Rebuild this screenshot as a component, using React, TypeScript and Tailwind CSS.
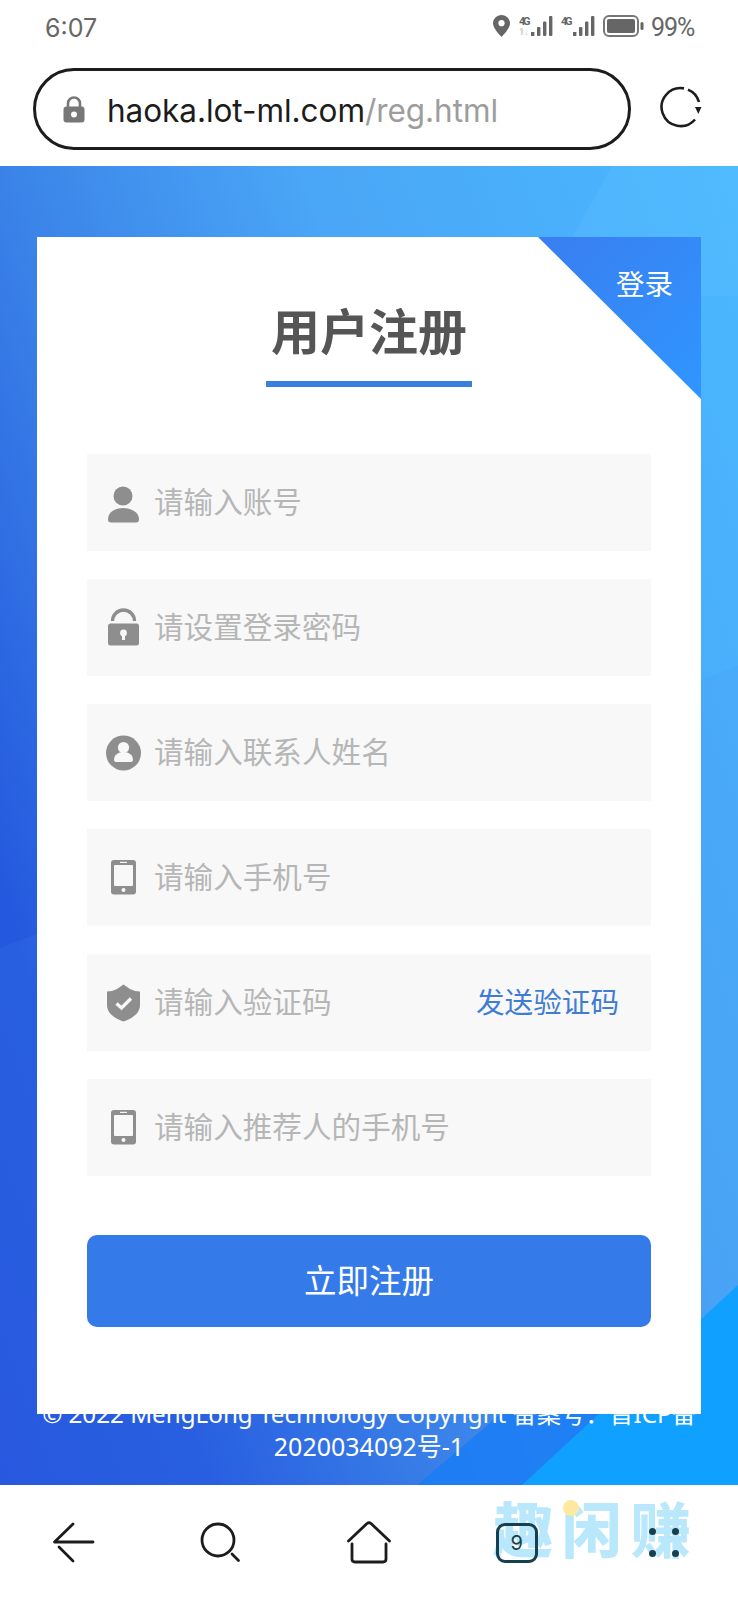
const cjk = "font-['Noto_Sans','Noto_Sans_CJK_SC',sans-serif]";

const Signal = ({ roaming }: { roaming?: boolean }) => (
  <svg width="34" height="22" viewBox="0 0 34 22" fill="#666">
    <text x="0" y="9.5" fontSize="11" fontWeight="700" fontFamily="Roboto, sans-serif" textLength="11.500">4G</text>
    {roaming && <text x="0" y="20" fontSize="9" fontWeight="700" fill="#c9c9c9" fontFamily="Roboto, sans-serif">1↓</text>}
    <rect x="12" y="17" width="3.4" height="4" />
    <rect x="18" y="12" width="3.4" height="9" rx="1" />
    <rect x="24" y="6.5" width="3.4" height="14.5" rx="1" />
    <rect x="30" y="1" width="3.4" height="20" rx="1" />
  </svg>
);

const StatusBar = () => (
  <div className="h-[60px] flex items-center justify-between pl-[45px] pr-[41px] pb-[9px] font-['Inter',sans-serif] text-[#666]">
    <span className="mt-[5px] text-[25px] leading-none">6:07</span>
    <div className="flex items-center">
      <svg width="17" height="22" viewBox="0 0 17 22" fill="#666">
        <path d="M8.5 0C3.8 0 0 3.700 0 8.300 0 14 8.500 22 8.500 22S17 14 17 8.300C17 3.700 13.200 0 8.500 0Z" />
        <circle cx="8.5" cy="8.2" r="3.1" fill="#fff" />
      </svg>
      <div className="ml-[9px]"><Signal roaming /></div>
      <div className="ml-[8px]"><Signal /></div>
      <svg className="ml-[8px]" width="41" height="22" viewBox="0 0 41 22" fill="#666">
        <rect x="1" y="1" width="34" height="20" rx="5" fill="none" stroke="#777" strokeWidth="2" />
        <rect x="4" y="4" width="28" height="14" rx="2" />
        <rect x="37.5" y="7" width="3" height="8" rx="1.5" />
      </svg>
      <span className="ml-[7px] mt-[3px] w-[46px] text-[25px] leading-none tracking-[-1px] font-['Roboto',sans-serif]">99%</span>
    </div>
  </div>
);

const UrlBar = () => (
  <div className="h-[106px] flex items-start pl-[33px] pt-[8px]">
    <div className="w-[598px] h-[82px] rounded-full border-[3px] border-[#1c1c1c] flex items-center pl-[27px]">
      <svg width="22" height="27" viewBox="0 0 22 27" fill="#777">
        <path d="M5 12V7.500a6 6 0 0 1 12 0V12" fill="none" stroke="#777" strokeWidth="2.6" />
        <rect x="0.5" y="10.5" width="21" height="16" rx="3" />
        <circle cx="11" cy="18.5" r="3" fill="#fff" />
      </svg>
      <span className="ml-[22px] mt-[3px] text-[31.5px] leading-none font-['Inter',sans-serif] tracking-[-0.05px] text-[#1c1c1c]">
        haoka.lot-ml.com<span className="text-[#9d9d9d]">/reg.html</span>
      </span>
    </div>
    <svg className="ml-[28px] mt-[18px]" width="43" height="43" viewBox="0 0 43 43" fill="none" stroke="#1c1c1c" strokeWidth="2.6">
      <path d="M25 2.400A19 19 0 1 0 36 33.500" />
      <path d="M29 3.600A19 19 0 0 1 40 16" />
      <path d="M36 21h6.500l-3.200 7z" fill="#1c1c1c" stroke="none" />
    </svg>
  </div>
);

const UserIcon = () => (
  <svg width="34" height="40" viewBox="0 0 34 40" fill="#8e8e8f">
    <circle cx="16" cy="13" r="9.5" />
    <path d="M1 36.500C1 29 8 25 16 25s16 4 16 11.500q0 3-3 3H4q-3 0-3-3Z" />
  </svg>
);

const LockIcon = () => (
  <svg width="34" height="40" viewBox="0 0 34 40" fill="#8e8e8f">
    <path d="M5.500 13A11 11 0 0 1 27.500 13" fill="none" stroke="#8e8e8f" strokeWidth="3.4" />
    <rect x="1" y="15.5" width="31" height="22" rx="2.5" />
    <circle cx="16.5" cy="25" r="3.4" fill="#f8f8f9" />
    <rect x="15" y="25" width="3" height="7" fill="#f8f8f9" />
  </svg>
);

const ContactIcon = () => (
  <svg width="34" height="40" viewBox="0 0 34 40" fill="#8e8e8f" className="overflow-visible">
    <circle cx="16.5" cy="20" r="17.5" />
    <circle cx="16.5" cy="14.5" r="5.6" fill="#f8f8f9" />
    <path d="M7 27c0-5 4-8 9.500-8s9.500 3 9.500 8q0 2-2 2H9q-2 0-2-2Z" fill="#f8f8f9" />
  </svg>
);

const PhoneIcon = () => (
  <svg width="34" height="40" viewBox="0 0 34 40" fill="#8e8e8f">
    <rect x="4" y="2" width="25" height="34.5" rx="3" />
    <rect x="7" y="7" width="19" height="21" rx="1" fill="#f8f8f9" />
    <rect x="13" y="3.8" width="7" height="1.2" fill="#f8f8f9" />
    <circle cx="16.5" cy="32" r="2" fill="#f8f8f9" />
  </svg>
);

const ShieldIcon = () => (
  <svg width="34" height="40" viewBox="0 0 34 40" fill="#8e8e8f">
    <path d="M16.500 1.500 23 6q5 2.500 10 2.500V22c0 9-9 14-16.500 16.500C9 36 0 31 0 22V8.500Q5 8.500 10 6Z" />
    <path d="M9.500 20.500l5 4.500 9.500-9.500" fill="none" stroke="#f8f8f9" strokeWidth="3.4" />
  </svg>
);

const fields = [
  { icon: <UserIcon />, placeholder: "请输入账号" },
  { icon: <LockIcon />, placeholder: "请设置登录密码" },
  { icon: <ContactIcon />, placeholder: "请输入联系人姓名" },
  { icon: <PhoneIcon />, placeholder: "请输入手机号" },
  { icon: <ShieldIcon />, placeholder: "请输入验证码", action: "发送验证码" },
  { icon: <PhoneIcon />, placeholder: "请输入推荐人的手机号" },
];

const RegisterCard = () => (
  <div className={`relative z-10 mx-[37px] mt-[71px] h-[1177px] bg-white px-[50px] pt-[64px] ${cjk}`}>
    <a className="absolute top-0 right-0 w-[163px] h-[162px] [clip-path:polygon(0_0,100%_0,100%_100%)] bg-[linear-gradient(135deg,#3a7ef0,#2f96ff)] text-white text-[28.5px] leading-none pt-[33px] pl-[78px]">
      登录
    </a>
    <h1 className="text-center text-[49px] leading-[60px] font-bold text-[#555]">用户注册</h1>
    <div className="w-[206px] h-[6px] mt-[20px] mx-auto bg-[#3a7fdf]" />
    <div className="mt-[67px] flex flex-col gap-[28px]">
      {fields.map((f) => (
        <div key={f.placeholder} className="h-[97px] bg-[#f8f8f9] flex items-center pl-[20px] pr-[32px]">
          <span className="w-[34px] shrink-0">{f.icon}</span>
          <input
            placeholder={f.placeholder}
            className="ml-[13px] flex-1 min-w-0 bg-transparent outline-none text-[29.6px] placeholder:text-[#b6b6b6]"
          />
          {f.action && <span className="text-[28.6px] text-[#3f7cd4] shrink-0">{f.action}</span>}
        </div>
      ))}
    </div>
    <button className="mt-[59px] w-full h-[92px] rounded-[10px] bg-[#347ae8] text-white text-[32.5px]">立即注册</button>
  </div>
);

const MainArea = () => (
  <div className="relative h-[1319px] overflow-hidden bg-[linear-gradient(70deg,#2450dc_0%,#2458de_17.5%,#3a82e8_39%,#4aa6f6_64%,#4ab8ff_100%)]">
    <svg className="absolute inset-0" width="738" height="1319" viewBox="0 0 738 1319">
      <polygon points="0,782 738,500 738,1319 0,1319" fill="#4a8cf0" opacity="0.14" />
      <polygon points="612,0 738,0 738,130 540,130" fill="#62c2ff" opacity="0.25" />
      <polygon points="417,1319 540,1215 690,1215 690,1319" fill="#1a7cf5" opacity="0.85" />
      <polygon points="522,1319 738,1119 738,1319" fill="#10a0ff" />
    </svg>
    <RegisterCard />
    <div className={`relative mt-[-17px] text-center text-white whitespace-nowrap ${cjk}`}>
      <div className="text-[24.2px] leading-[34px]">© 2022 MengLong Technology Copyright 备案号：晋ICP备</div>
      <div className="text-[25px] leading-[30px]">2020034092号-1</div>
    </div>
  </div>
);

const NavIcon = ({ children }: { children: React.ReactNode }) => (
  <div className="flex items-center justify-center">
    <svg width="50" height="44" viewBox="0 0 50 44" fill="none" stroke="#1c1c1c" strokeWidth="2.8" strokeLinecap="round" strokeLinejoin="round">
      {children}
    </svg>
  </div>
);

const BottomNav = () => (
  <div className="relative flex-1 bg-white">
    <div className={`absolute left-[493px] top-[10px] flex gap-[9px] text-[60px] leading-[70px] font-black text-[#b9e7fb] ${cjk}`}>
      <span>趣</span>
      <span>闲</span>
      <span>赚</span>
    </div>
    <div className="absolute left-[563px] top-[15px] w-[16px] h-[16px] rounded-full bg-[#fde9a0]" />
    <div className="relative grid grid-cols-5 h-full items-center">
      <NavIcon>
        <path d="M44 21H5.500L24 3" />
        <path d="M10 26l14 14" />
      </NavIcon>
      <NavIcon>
        <circle cx="22" cy="19" r="16" />
        <path d="M36 33l6.500 6.500" />
      </NavIcon>
      <NavIcon>
        <path d="M4.500 20 23 2.500q2-1.500 4 0L45.500 20" />
        <path d="M8 23v15q0 3 3 3h28q3 0 3-3V23" />
      </NavIcon>
      <div className="flex items-center justify-center">
        <div className="w-[42px] h-[40px] rounded-[9px] border-[3px] border-[#14404f] flex items-center justify-center font-['Inter',sans-serif] text-[20px] leading-none text-[#14404f]">
          9
        </div>
      </div>
      <div className="flex items-center justify-center">
        <div className="grid grid-cols-2 gap-x-[16px] gap-y-[15px]">
          <span className="w-[7px] h-[7px] rounded-full bg-[#14404f]" />
          <span className="w-[7px] h-[7px] rounded-full bg-[#14404f]" />
          <span className="w-[7px] h-[7px] rounded-full bg-[#14404f]" />
          <span className="w-[7px] h-[7px] rounded-full bg-[#14404f]" />
        </div>
      </div>
    </div>
  </div>
);

const App: React.FC = () => {
  return (
    <div className="w-[738px] h-[1600px] flex flex-col bg-white overflow-hidden">
      <StatusBar />
      <UrlBar />
      <MainArea />
      <BottomNav />
    </div>
  );
};

export default App;
